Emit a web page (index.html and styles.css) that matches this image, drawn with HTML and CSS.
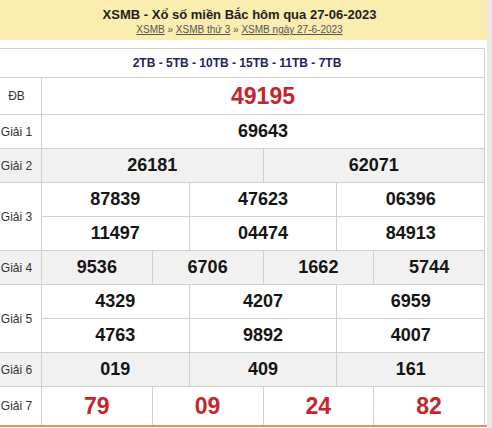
FILE: index.html
```html
<!DOCTYPE html>
<html lang="vi">
<head>
<meta charset="utf-8">
<title>XSMB</title>
<link rel="stylesheet" href="styles.css">
</head>
<body>
<div class="page">
  <div class="header">
    <h1 class="title">XSMB - Xổ số miền Bắc hôm qua 27-06-2023</h1>
    <div class="crumbs"><a href="#">XSMB</a> » <a href="#">XSMB thứ 3</a> » <a href="#">XSMB ngày 27-6-2023</a></div>
  </div>
  <div class="results">
    <div class="codes">2TB - 5TB - 10TB - 15TB - 11TB - 7TB</div>

    <div class="label">ĐB</div>
    <div class="num big red s12">49195</div>

    <div class="label">Giải 1</div>
    <div class="num s12">69643</div>

    <div class="label gray">Giải 2</div>
    <div class="num gray s6">26181</div>
    <div class="num gray s6">62071</div>

    <div class="label r2">Giải 3</div>
    <div class="num s4">87839</div>
    <div class="num s4">47623</div>
    <div class="num s4">06396</div>
    <div class="num s4">11497</div>
    <div class="num s4">04474</div>
    <div class="num s4">84913</div>

    <div class="label gray">Giải 4</div>
    <div class="num gray s3">9536</div>
    <div class="num gray s3">6706</div>
    <div class="num gray s3">1662</div>
    <div class="num gray s3">5744</div>

    <div class="label r2">Giải 5</div>
    <div class="num s4">4329</div>
    <div class="num s4">4207</div>
    <div class="num s4">6959</div>
    <div class="num s4">4763</div>
    <div class="num s4">9892</div>
    <div class="num s4">4007</div>

    <div class="label gray">Giải 6</div>
    <div class="num gray s4">019</div>
    <div class="num gray s4">409</div>
    <div class="num gray s4">161</div>

    <div class="label">Giải 7</div>
    <div class="num big red s3">79</div>
    <div class="num big red s3">09</div>
    <div class="num big red s3">24</div>
    <div class="num big red s3">82</div>
  </div>
  <div class="bottom-line"></div>
</div>
</body>
</html>
```

FILE: styles.css
```css
* { box-sizing: border-box; }

html, body {
  margin: 0;
  padding: 0;
}

body {
  background: #e9e9e9;
  font-family: "Liberation Sans", Arial, sans-serif;
  color: #222;
}

.page {
  width: 487px;
  height: 428px;
  background: #ffffff;
  overflow: hidden;
}

.header {
  height: 40px;
  background: #fbecb0;
  text-align: center;
  padding-top: 7px;
  padding-right: 8px;
}

.title {
  margin: 0;
  font-size: 13px;
  line-height: 15px;
  font-weight: bold;
  color: #1e1e1e;
}

.crumbs {
  font-size: 10px;
  line-height: 12px;
  margin-top: 2px;
  color: #555;
}

.crumbs a {
  color: #555;
  text-decoration: underline;
}

.results {
  margin-top: 8px;
  width: 485px;
  display: grid;
  grid-template-columns: 41px repeat(12, 1fr);
  grid-template-rows: 28px 36px repeat(8, 33px) 38px;
  gap: 1px;
  padding: 1px 1px 0 0;
  background: #d0d0d0;
}

.codes {
  grid-column: 1 / -1;
  background: #fff;
  display: flex;
  align-items: center;
  justify-content: center;
  font-size: 12px;
  font-weight: bold;
  color: #23235f;
  padding-right: 10px;
}

.label {
  background: #fff;
  display: flex;
  align-items: center;
  justify-content: center;
  padding-right: 8px;
  font-size: 12px;
  white-space: nowrap;
  color: #333;
}

.r2 { grid-row: span 2; }

.num {
  background: #fff;
  display: flex;
  align-items: center;
  justify-content: center;
  font-size: 18px;
  font-weight: bold;
  color: #151515;
}

.gray { background: #f1f1f1; }

.big { font-size: 23px; }

.red { color: #c4262e; }

.s12 { grid-column: span 12; }
.s6 { grid-column: span 6; }
.s4 { grid-column: span 4; }
.s3 { grid-column: span 3; }

.bottom-line {
  width: 487px;
  height: 2px;
  background: #dc9a5a;
}
```
